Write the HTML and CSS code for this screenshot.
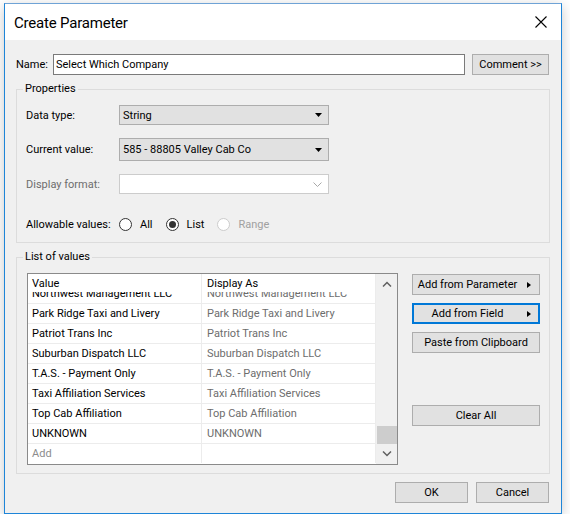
FILE: index.html
```html
<!DOCTYPE html>
<html lang="en">
<head>
  <meta charset="UTF-8" />
  <meta name="viewport" content="width=device-width, initial-scale=1.0" />
  <title>Create Parameter</title>
  <link rel="stylesheet" href="styles.css">
</head>
<body>
  <div class="dialog">
    <div class="titlebar">
      <span class="title">Create Parameter</span>
      <svg class="close" width="12" height="12" viewBox="0 0 12 12">
        <path d="M0.5 0.5 L11.5 11.5 M11.5 0.5 L0.5 11.5" stroke="#000" stroke-width="1.1" fill="none" />
      </svg>
    </div>

    <div class="content">
      <div class="name-row">
        <span class="name-label">Name:</span>
        <div class="textbox">Select Which Company</div>
        <button class="btn comment-btn">Comment &gt;&gt;</button>
      </div>

      <fieldset class="group">
        <legend>Properties</legend>
        <div class="props-body">
          <div class="field-row">
            <span class="field-label">Data type:</span>
            <div class="combo">
              <span>String</span>
              <svg width="7" height="4" viewBox="0 0 7 4"><polygon points="0,0 7,0 3.5,4" fill="#000" /></svg>
            </div>
          </div>
          <div class="field-row">
            <span class="field-label">Current value:</span>
            <div class="combo tall">
              <span>585 - 88805 Valley Cab Co</span>
              <svg width="7" height="4" viewBox="0 0 7 4"><polygon points="0,0 7,0 3.5,4" fill="#000" /></svg>
            </div>
          </div>
          <div class="field-row">
            <span class="field-label disabled">Display format:</span>
            <div class="combo blank">
              <span></span>
              <svg width="9" height="5" viewBox="0 0 9 5"><polyline points="0.5,0.5 4.5,4.5 8.5,0.5" fill="none" stroke="#a8a8a8" /></svg>
            </div>
          </div>
          <div class="field-row radio-row">
            <span class="field-label">Allowable values:</span>
            <label class="radio"><span class="dot"></span>All</label>
            <label class="radio"><span class="dot checked"></span>List</label>
            <label class="radio disabled"><span class="dot"></span>Range</label>
          </div>
        </div>
      </fieldset>

      <fieldset class="group">
        <legend>List of values</legend>
        <div class="values-body">
          <div class="grid">
            <div class="grid-main">
              <div class="grid-head">
                <div class="cell">Value</div>
                <div class="cell">Display As</div>
              </div>
              <div class="grid-rows">
                <div class="grid-list">
                  <div class="grid-row"><div class="cell">Northwest Management LLC</div><div class="cell shown">Northwest Management LLC</div></div>
                  <div class="grid-row"><div class="cell">Park Ridge Taxi and Livery</div><div class="cell shown">Park Ridge Taxi and Livery</div></div>
                  <div class="grid-row"><div class="cell">Patriot Trans Inc</div><div class="cell shown">Patriot Trans Inc</div></div>
                  <div class="grid-row"><div class="cell">Suburban Dispatch LLC</div><div class="cell shown">Suburban Dispatch LLC</div></div>
                  <div class="grid-row"><div class="cell">T.A.S. - Payment Only</div><div class="cell shown">T.A.S. - Payment Only</div></div>
                  <div class="grid-row"><div class="cell">Taxi Affiliation Services</div><div class="cell shown">Taxi Affiliation Services</div></div>
                  <div class="grid-row"><div class="cell">Top Cab Affiliation</div><div class="cell shown">Top Cab Affiliation</div></div>
                  <div class="grid-row"><div class="cell">UNKNOWN</div><div class="cell shown">UNKNOWN</div></div>
                  <div class="grid-row"><div class="cell add">Add</div><div class="cell"></div></div>
                </div>
              </div>
            </div>
            <div class="scrollbar">
              <div class="sb-btn">
                <svg width="10" height="6" viewBox="0 0 10 6"><polyline points="1,5.5 5,1.5 9,5.5" fill="none" stroke="#606060" stroke-width="1.5" /></svg>
              </div>
              <div class="sb-track"><div class="sb-thumb"></div></div>
              <div class="sb-btn">
                <svg width="10" height="6" viewBox="0 0 10 6"><polyline points="1,0.5 5,4.5 9,0.5" fill="none" stroke="#606060" stroke-width="1.5" /></svg>
              </div>
            </div>
          </div>

          <div class="side-buttons">
            <button class="btn menu-btn">Add from Parameter</button>
            <button class="btn menu-btn focus">Add from Field</button>
            <button class="btn">Paste from Clipboard</button>
            <button class="btn clear-btn">Clear All</button>
          </div>
        </div>
      </fieldset>

      <div class="footer">
        <button class="btn footer-btn">OK</button>
        <button class="btn footer-btn">Cancel</button>
      </div>
    </div>
  </div>
</body>
</html>
```

FILE: styles.css
```css
body {
  margin: 0;
  background: #fff;
  font-family: Roboto, "Liberation Sans", Arial, sans-serif;
  font-size: 11px;
  color: #000;
}
.dialog {
  width: 558px;
  height: 511px;
  margin: 3px 0 0 4px;
  box-sizing: border-box;
  border: 1px solid #1e85d8;
  border-top-color: #6fa3d6;
  background: #f0f0f0;
  box-shadow: 0 3px 12px rgba(0, 0, 0, 0.22);
  display: flex;
  flex-direction: column;
}
.titlebar {
  height: 36px;
  flex: none;
  background: #fff;
  display: flex;
  align-items: center;
  justify-content: space-between;
  padding: 0 14px 0 9px;
}
.title {
  font-size: 15px;
  letter-spacing: -0.2px;
  padding-top: 2px;
}
.content {
  padding: 14px 12px 0 11px;
}
.name-row {
  display: flex;
  align-items: center;
  height: 21px;
}
.name-label {
  width: 37px;
}
.textbox {
  flex: 1;
  height: 21px;
  box-sizing: border-box;
  border: 1px solid #7a7a7a;
  background: #fff;
  padding-left: 2px;
  line-height: 19px;
}
.btn {
  height: 21px;
  box-sizing: border-box;
  border: 1px solid #adadad;
  background: #e1e1e1;
  font: inherit;
  color: #000;
  padding: 0;
}
.comment-btn {
  width: 77px;
  margin-left: 7px;
}
.group {
  border: 1px solid #dcdcdc;
  margin: 6px -1px 0 0;
  padding: 0;
  min-width: 0;
}
.group legend {
  margin-left: 6px;
  padding: 0 2px;
  line-height: 16px;
}
.props-body {
  padding: 8px 0 8px 9px;
}
.field-row {
  display: flex;
  align-items: center;
}
.field-row + .field-row {
  margin-top: 13px;
}
.field-label {
  width: 93px;
  flex: none;
}
.field-label.disabled {
  color: #6d6d6d;
}
.combo {
  width: 210px;
  height: 20px;
  box-sizing: border-box;
  border: 1px solid #adadad;
  background: #e1e1e1;
  display: flex;
  align-items: center;
  justify-content: space-between;
  padding: 0 6px 0 3px;
}
.combo.tall {
  height: 23px;
}
.combo.blank {
  background: #fff;
  border-color: #cccccc;
  padding-right: 6px;
}
.field-row.radio-row {
  margin-top: 20px;
  height: 20px;
}
.radio {
  display: flex;
  align-items: center;
}
.radio + .radio {
  margin-left: 13px;
}
.radio.disabled {
  color: #a0a0a0;
}
.dot {
  width: 13px;
  height: 13px;
  box-sizing: border-box;
  border: 1px solid #333;
  border-radius: 50%;
  background: #fff;
  margin-right: 8px;
  display: flex;
  align-items: center;
  justify-content: center;
}
.dot.checked {
  border-width: 1.5px;
}
.dot.checked::after {
  content: "";
  width: 7px;
  height: 7px;
  border-radius: 50%;
  background: #333;
}
.radio.disabled .dot {
  border-color: #cccccc;
}
.values-body {
  display: flex;
  align-items: flex-start;
  padding: 8px 9px 8px 10px;
}
.grid {
  width: 371px;
  height: 192px;
  flex: none;
  box-sizing: border-box;
  border: 1px solid #8a8a8a;
  background: #fff;
  display: flex;
}
.grid-main {
  flex: 1;
  min-width: 0;
  display: flex;
  flex-direction: column;
}
.grid-head {
  display: flex;
  height: 18px;
  flex: none;
  background: #fff;
}
.grid-head .cell {
  line-height: 16px;
  padding-top: 2px;
}
.grid-rows {
  flex: 1;
  overflow: hidden;
}
.grid-list {
  margin-top: -9px;
}
.grid-row {
  display: flex;
  height: 20px;
  box-sizing: border-box;
  border-top: 1px solid #ececec;
}
.cell {
  width: 174px;
  flex: none;
  box-sizing: border-box;
  border-right: 1px solid #ececec;
  padding-left: 4px;
  line-height: 19px;
  white-space: nowrap;
  overflow: hidden;
}
.cell + .cell {
  padding-left: 5px;
}
.cell.shown {
  color: #6d6d6d;
}
.cell.add {
  color: #8c8c8c;
}
.scrollbar {
  width: 21px;
  flex: none;
  background: #f0f0f0;
  display: flex;
  flex-direction: column;
}
.sb-btn {
  height: 20px;
  flex: none;
  display: flex;
  align-items: center;
  justify-content: center;
}
.sb-track {
  flex: 1;
  display: flex;
  flex-direction: column;
  justify-content: flex-end;
}
.sb-thumb {
  height: 18px;
  margin-left: 1px;
  background: #cdcdcd;
}
.side-buttons {
  width: 128px;
  margin-left: 14px;
  padding-top: 1px;
  display: flex;
  flex-direction: column;
  gap: 8px;
}
.menu-btn {
  position: relative;
  padding-right: 17px;
}
.menu-btn::after {
  content: "";
  position: absolute;
  right: 8px;
  top: 50%;
  margin-top: -3px;
  border-left: 4px solid #000;
  border-top: 3px solid transparent;
  border-bottom: 3px solid transparent;
}
.btn.focus {
  border: 2px solid #0078d7;
}
.focus.menu-btn::after {
  right: 7px;
}
.clear-btn {
  margin-top: 44px;
}
.footer {
  display: flex;
  justify-content: flex-end;
  gap: 8px;
  margin-top: 8px;
}
.footer-btn {
  width: 73px;
}
```
